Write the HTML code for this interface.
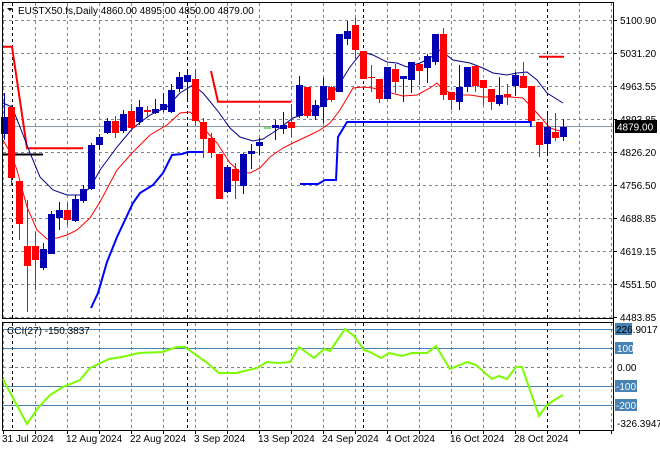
<!DOCTYPE html>
<html><head><meta charset="utf-8"><style>
html,body{margin:0;padding:0;background:#fff;width:660px;height:450px;overflow:hidden}
svg{display:block}
text{font-family:"Liberation Sans",sans-serif;font-size:10px;fill:#000}
</style></head><body>
<svg id="s" width="660" height="450" viewBox="0 0 660 450" xmlns="http://www.w3.org/2000/svg">
<rect width="660" height="450" fill="#fff"/>
<g id="grid" stroke="#7a8596" stroke-width="1" stroke-dasharray="3,3" fill="none"></g>
<g id="vgrid" stroke-width="1" stroke-dasharray="3,3" fill="none"></g>
<!-- current price line -->
<line x1="3" y1="126.5" x2="613" y2="126.5" stroke="#8a96a4" stroke-width="1"/>
<!-- thick red -->
<polyline points="3,46.7 12,46.7 27,148.3 83,148.3" stroke="#f00" stroke-width="2" fill="none"/>
<polyline points="211,71 218,101.7 291,101.7" stroke="#f00" stroke-width="2" fill="none"/>
<line x1="539" y1="56.7" x2="564" y2="56.7" stroke="#f00" stroke-width="2"/>
<line x1="3" y1="154.5" x2="43" y2="154.5" stroke="#000" stroke-width="2"/>
<!-- thick blue -->
<polyline points="91,308 98,293 107,262 117,237 133,203 140,193 153,185 163,173 172,155 182,154 188,152 204,152" stroke="#0000ff" stroke-width="2" fill="none"/>
<polyline points="300,184 318,184 325,180 333,180 336,180 338,137 347,122 531,122 531,127" stroke="#0000ff" stroke-width="2" fill="none"/>
<!-- navy MA -->
<polyline points="3,103 12,107 20,127 30,153 40,177 53,190 67,195 80,195 90,188 100,170 117,147 133,128 150,115 167,107 180,93 193,85 203,93 217,110 230,128 240,137 253,141 263,139 277,130 293,118 307,113 320,107 330,97 340,83 350,67 362,52 373,55 387,62 397,63 407,67 420,63 430,58 440,50 453,60 470,63 483,68 493,73 507,75 517,73 527,72 537,80 547,93 563,103" stroke="#00008b" stroke-width="1" fill="none"/>
<!-- red MA -->
<polyline points="3,140 10,152 17,170 27,207 37,230 47,239 57,238 67,235 77,230 90,218 100,202 117,170 133,152 150,135 167,125 180,113 190,112 197,118 207,132 217,143 230,163 240,172 250,173 260,168 270,157 283,148 293,143 310,135 320,130 330,123 340,110 353,88 363,87 373,88 387,92 403,96 417,95 430,88 437,83 443,90 457,95 470,95 483,97 497,97 510,97 523,98 537,113 550,128 563,132" stroke="#f00" stroke-width="1" fill="none"/>
<g id="candles"></g>
<!-- borders -->
<line x1="2.5" y1="2" x2="2.5" y2="318" stroke="#000"/>
<line x1="2" y1="2.5" x2="613" y2="2.5" stroke="#000"/>
<line x1="613.5" y1="2" x2="613.5" y2="431" stroke="#000"/>
<line x1="2" y1="318.5" x2="613" y2="318.5" stroke="#000"/>
<line x1="2.5" y1="322" x2="2.5" y2="430" stroke="#000"/>
<line x1="2" y1="322.5" x2="613" y2="322.5" stroke="#000"/>
<line x1="2" y1="430.5" x2="613" y2="430.5" stroke="#000"/>
<!-- title -->
<path d="M7,8 L13,8 L10,11 Z" fill="#000"/>
<text x="18" y="14">EUSTX50.fs,Daily  4860.00 4895.00 4850.00 4879.00</text>
<!-- price axis -->
<g id="axis"></g>
<rect x="615" y="120" width="42" height="13" fill="#000"/>
<text x="617" y="130.5" style="fill:#fff">4879.00</text>
<!-- CCI -->
<g stroke="#4682b4" stroke-width="1">
<line x1="3" y1="329.5" x2="613" y2="329.5"/>
<line x1="3" y1="348.5" x2="613" y2="348.5"/>
<line x1="3" y1="386.5" x2="613" y2="386.5"/>
<line x1="3" y1="405.5" x2="613" y2="405.5"/>
</g>
<line x1="3" y1="367.5" x2="613" y2="367.5" stroke="#7a8596" stroke-dasharray="3,3"/>
<polyline points="3,379 13,398 27,424 38,408 50,395 63,387 80,380 90,368 109,359 122,357 139,353 162,352 177,347 185,347 206,362 219,373 236,373 257,368 267,362 278,363 290,362 299,347 314,358 324,349 330,351 345,329 354,336 364,350 370,352 381,358 389,353 402,356 412,353 427,353 436,346 450,369 467,362 476,365 492,379 499,376 507,379 516,367 522,367 539,416 547,405 556,399 563,395" stroke="#7cfc00" stroke-width="2" fill="none"/>
<text x="7" y="334">CCI(27) -150.3837</text>
<rect x="615" y="323" width="17" height="12" fill="#4682b4"/>
<text x="616" y="333">226.9017</text>
<rect x="615" y="342" width="18" height="12" fill="#4682b4"/>
<text x="617" y="352" style="fill:#fff">100</text>
<text x="617" y="371">0.00</text>
<rect x="615" y="380" width="22" height="12" fill="#4682b4"/>
<text x="616" y="390" style="fill:#fff">-100</text>
<rect x="615" y="399" width="22" height="12" fill="#4682b4"/>
<text x="616" y="409" style="fill:#fff">-200</text>
<text x="617" y="427">-326.3947</text>
<!-- dates -->
<g id="dates">
<text x="2" y="442">31 Jul 2024</text>
<text x="66" y="442">12 Aug 2024</text>
<text x="130" y="442">22 Aug 2024</text>
<text x="194" y="442">3 Sep 2024</text>
<text x="258" y="442">13 Sep 2024</text>
<text x="322" y="442">24 Sep 2024</text>
<text x="386" y="442">4 Oct 2024</text>
<text x="450" y="442">16 Oct 2024</text>
<text x="514" y="442">28 Oct 2024</text>
</g>
</svg>
<script>
var NS="http://www.w3.org/2000/svg";
function el(p,t,a){var e=document.createElementNS(NS,t);for(var k in a)e.setAttribute(k,a[k]);p.appendChild(e);return e;}
var g=document.getElementById('grid'),vg=document.getElementById('vgrid'),ax=document.getElementById('axis');
var ys=[20,53,86,119,152,185,218,251,284,317],lb=["5100.90","5031.20","4963.55","4893.85","4826.20","4756.50","4688.85","4619.15","4551.50","4483.85"];
ys.forEach(function(y,i){el(g,'line',{x1:3,x2:613,y1:y+.5,y2:y+.5});
 el(ax,'line',{x1:613,x2:617,y1:y+.5,y2:y+.5,stroke:'#000'});
 var t=el(ax,'text',{x:620,y:y+4});t.textContent=lb[i];});
for(var x=3;x<613;x+=32){[[3,318],[323,430]].forEach(function(r){el(vg,'line',{x1:x+.5,x2:x+.5,y1:r[0],y2:r[1],stroke:'#7a8596'});});
 el(vg,'line',{x1:x+.5,x2:x+.5,y1:430,y2:434,stroke:'#000','stroke-dasharray':'none'});}
[12,187,363,547].forEach(function(x){[[3,318],[323,430]].forEach(function(r){el(vg,'line',{x1:x+.5,x2:x+.5,y1:r[0],y2:r[1],stroke:'#000'});});});
var R='#ff0000',B='#00008b';
var c=[[4,117,134,93,140,B],[11,107,178,105,185,R],[19,181,224,181,240,R],[27,246,266,200,312,R],[35,246,260,232,290,R],[43,249,268,243,270,B],[51,214,254,211,254,B],[59,210,218,202,230,B],[67,210,220,203,225,R],[75,199,221,195,222,B],[83,189,201,185,203,B],[91,145,189,143,190,B],[99,137,145,134,150,B],[107,121,133,118,134,B],[115,121,133,116,138,R],[123,114,131,110,133,B],[131,111,128,104,130,R],[139,107,122,100,125,B],[147,110,112,106,118,R],[155,109,113,99,114,B],[163,104,110,93,112,B],[171,90,112,84,113,B],[179,77,89,72,92,B],[187,75,82,72,101,B],[195,79,121,69,126,R],[203,122,139,118,158,R],[211,138,153,133,158,R],[219,154,199,154,199,R],[227,167,192,165,193,B],[235,169,181,163,199,R],[243,154,186,153,194,B],[251,151,154,144,169,B],[259,142,146,138,155,B],[267,127.5,128.5,127.5,128.5,'#00c000'],[275,125,128,120,140,B],[283,125,129,112,134,B],[291,122,128,104,137,R],[299,85,116,76,118,B],[307,87,116,87,118,R],[315,105,116,100,120,B],[323,86,107,78,123,B],[331,87,100,86,102,R],[339,34,92,34,92,B],[347,31,39,21,45,B],[355,25,50,18,61,R],[363,51,79,51,79,R],[371,77,78,65,92,R],[379,79,99,79,103,R],[387,67,99,67,99,B],[395,69,82,64,93,R],[403,76,79,76,102,B],[411,62,80,62,93,B],[419,64,71,64,85,R],[427,56,68,54,83,B],[435,34,62,34,65,B],[443,34,95,28,100,R],[451,92,100,92,110,R],[459,87,102,65,110,B],[467,67,87,67,92,B],[475,66,86,66,92,R],[483,80,88,80,105,R],[491,89,102,89,110,R],[499,95,104,77,106,B],[507,94,97,84,105,R],[515,75,86,72,96,B],[523,76,88,62,88,R],[531,86,121,86,127,R],[539,122,145,122,157,R],[547,127,144,114,153,B],[555,132,138,113,141,R],[563,127,137,119,141,B]];
var cg=document.getElementById('candles');
c.forEach(function(d){var col=d[5]=='#00008b'?'#0000b0':d[5];
 el(cg,'line',{x1:d[0]+.5,x2:d[0]+.5,y1:d[3],y2:d[4],stroke:col});
 el(cg,'rect',{x:d[0]-3,y:d[1],width:7,height:Math.max(1,d[2]-d[1]),fill:col});});
</script>
</body></html>
